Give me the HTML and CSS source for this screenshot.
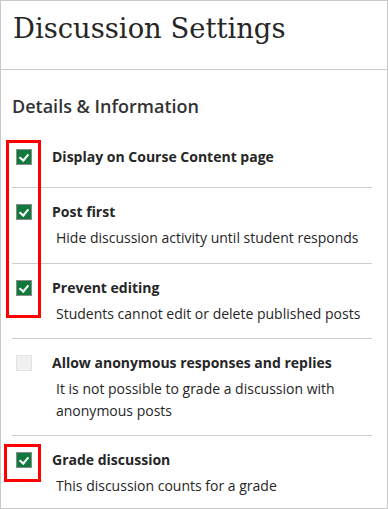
FILE: index.html
```html
<!DOCTYPE html>
<html lang="en">
<head>
    <meta charset="UTF-8">
    <meta name="viewport" content="width=device-width, initial-scale=1.0">
    <title>Discussion Settings</title>
    <link rel="stylesheet" href="styles.css">
</head>
<body>
    <div class="panel">
        <!-- header -->
        <div class="panel-header">
            <h1 class="panel-title">Discussion Settings</h1>
        </div>

        <!-- details -->
        <div class="details">
            <h2 class="details-title">Details &amp; Information</h2>

            <div class="option-list">
                <div class="option option-first">
                    <span class="check checked"></span>
                    <div class="option-text">
                        <div class="option-label">Display on Course Content page</div>
                    </div>
                </div>
                <div class="option">
                    <span class="check checked"></span>
                    <div class="option-text">
                        <div class="option-label">Post first</div>
                        <div class="option-desc">Hide discussion activity until student responds</div>
                    </div>
                </div>
                <div class="option">
                    <span class="check checked"></span>
                    <div class="option-text">
                        <div class="option-label">Prevent editing</div>
                        <div class="option-desc">Students cannot edit or delete published posts</div>
                    </div>
                </div>
                <div class="option">
                    <span class="check disabled"></span>
                    <div class="option-text">
                        <div class="option-label">Allow anonymous responses and replies</div>
                        <div class="option-desc">It is not possible to grade a discussion with anonymous posts</div>
                    </div>
                </div>
                <div class="option">
                    <span class="check checked"></span>
                    <div class="option-text">
                        <div class="option-label">Grade discussion</div>
                        <div class="option-desc">This discussion counts for a grade</div>
                    </div>
                </div>

                <!-- highlight marks -->
                <div class="mark mark-top"></div>
                <div class="mark mark-bottom"></div>
            </div>
        </div>
    </div>
</body>
</html>
```

FILE: styles.css
```css
* {
    margin: 0;
    padding: 0;
    box-sizing: border-box;
}

body {
    background-color: #fff;
    font-family: "Open Sans", "Noto Sans", sans-serif;
    color: #262626;
}

.panel {
    width: 388px;
    height: 509px;
    border: 1px solid #c9c9c9;
    overflow: hidden;
}

/* header */
.panel-header {
    height: 69px;
    padding: 10px 12px 0;
    border-bottom: 1px solid #c9c9c9;
}

.panel-title {
    font-family: "DejaVu Serif", "Liberation Serif", serif;
    font-size: 27.4px;
    font-weight: normal;
    line-height: 36px;
    color: #262626;
}

/* details */
.details {
    padding: 24px 15px 0 11px;
}

.details-title {
    font-size: 18px;
    font-weight: 600;
    line-height: 24px;
    color: #333;
    margin-bottom: 15px;
}

.option-list {
    position: relative;
}

.option {
    display: flex;
    align-items: flex-start;
    padding: 14px 0;
    border-bottom: 1px solid #cdcdcd;
}

.option:last-of-type {
    border-bottom: none;
}

.option-first {
    padding-bottom: 20px;
}

.check {
    flex: none;
    width: 16px;
    height: 16px;
    margin: 2px 20px 0 4px;
    border: 1px solid #8c8c8c;
    position: relative;
}

.check.checked {
    background-color: #107a3c;
}

.check.checked::after {
    content: "";
    position: absolute;
    left: 4px;
    top: 2px;
    width: 4px;
    height: 7px;
    border: solid #fff;
    border-width: 0 2px 2px 0;
    transform: rotate(40deg);
}

.check.disabled {
    background-color: #f0f0f0;
    border-color: #e2e2e2;
}

.option-label {
    font-size: 14px;
    font-weight: 700;
    line-height: 20px;
}

.option-desc {
    font-size: 14px;
    line-height: 21.5px;
    margin-top: 5px;
    padding-left: 4px;
}

/* red highlight marks */
.mark {
    position: absolute;
    border: 3px solid #f00;
}

.mark-top {
    left: -6px;
    top: 7px;
    width: 35px;
    height: 178px;
}

.mark-bottom {
    left: -8px;
    top: 311px;
    width: 37px;
    height: 38px;
}
```
